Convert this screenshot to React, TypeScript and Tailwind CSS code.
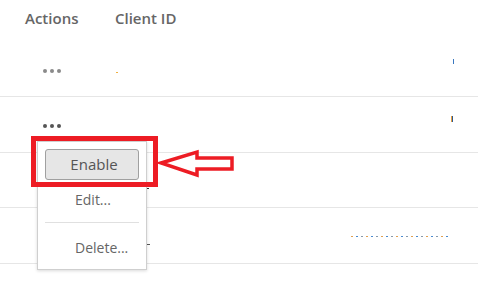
import React from "react";

const font = { fontFamily: '"Open Sans", "Liberation Sans", sans-serif' };

function Dots({ color }: { color: string }) {
  return (
    <div className="flex gap-[3px]">
      <span className={`block w-[4px] h-[4px] rounded-full ${color}`} />
      <span className={`block w-[4px] h-[4px] rounded-full ${color}`} />
      <span className={`block w-[4px] h-[4px] rounded-full ${color}`} />
    </div>
  );
}

export default function App() {
  return (
    <div className="relative w-[478px] h-[284px] bg-white overflow-hidden" style={font}>
      {/* header */}
      <div className="flex items-start h-[41px] pt-[7px] text-[15px] font-semibold text-[#666]">
        <div className="w-[115px] pl-[25px]">Actions</div>
        <div>Client ID</div>
      </div>
      {/* row 1 */}
      <div className="flex items-center h-[56px] border-b border-[#e6e6e6]">
        <div className="w-[116px] pl-[43px] pt-[4px]">
          <Dots color="bg-[#8a8a8a]" />
        </div>
        <div className="w-[2px] h-[1px] bg-[#f0b040] mt-[8px]" />
        <div className="ml-auto mr-[24px] w-[1px] h-[5px] bg-[#3a78c0] mb-[14px]" />
      </div>
      {/* row 2 */}
      <div className="flex items-center h-[56px] border-b border-[#e6e6e6]">
        <div className="w-[90px] pl-[43px] pt-[2px]">
          <Dots color="bg-[#555]" />
        </div>
        <div className="ml-auto mr-[25px] flex mb-[12px]">
          <span className="block w-[1px] h-[6px] bg-[#e8a040]" />
          <span className="block w-[1px] h-[6px] bg-[#2c5a90]" />
        </div>
      </div>
      {/* row 3 */}
      <div className="flex items-center h-[55px] border-b border-[#e6e6e6]">
        <div className="ml-[147px] w-[2px] h-[1px] bg-[#333] mt-[16px]" />
      </div>
      {/* row 4 */}
      <div className="flex items-center h-[56px] border-b border-[#e6e6e6]">
        <div className="ml-[147px] w-[3px] h-[1px] bg-[#555] mt-[18px]" />
        <div className="ml-auto mr-[30px] flex items-center gap-[3px] mt-[2px]">
          {Array.from({ length: 20 }).map((_, i) => (
            <span
              key={i}
              className={`block w-[2px] h-[1px] ${i % 3 === 0 ? "bg-[#e0a050]" : i % 3 === 1 ? "bg-[#4a8ad0]" : "bg-[#8899aa]"}`}
            />
          ))}
        </div>
      </div>

      {/* dropdown menu */}
      <div className="absolute left-[37px] top-[141px] w-[110px] h-[129px] bg-white border border-[#cfcfcf] shadow-[0_1px_3px_rgba(0,0,0,0.15)] flex flex-col">
        <div className="mt-[7px] ml-[7px] w-[94px] h-[31px] rounded-[3px] border border-[#a0a0a0] bg-[#e6e6e6] flex items-center justify-center text-[15px] text-[#555]">
          <span className="pl-[4px]">Enable</span>
        </div>
        <div className="h-[32px] flex items-center pl-[37px] text-[14px] text-[#666] pt-[6px]">Edit...</div>
        <div className="mx-[7px] mt-[10px] h-px bg-[#e0e0e0]" />
        <div className="h-[36px] flex items-center pl-[37px] text-[14px] text-[#666] pt-[12px]">Delete...</div>
      </div>

      {/* red annotation box */}
      <div className="absolute left-[31px] top-[136px] w-[127px] h-[51px] border-[5px] border-[#ed1c24]" />

      {/* arrow */}
      <svg className="absolute left-[158px] top-[148px]" width="78" height="32" viewBox="0 0 78 32">
        <path
          d="M3 15 L39 4 L39 10 L74 10 L74 21 L39 21 L39 27 Z"
          fill="white"
          stroke="#ed1c24"
          strokeWidth="3.5"
          strokeLinejoin="miter"
        />
      </svg>
    </div>
  );
}
